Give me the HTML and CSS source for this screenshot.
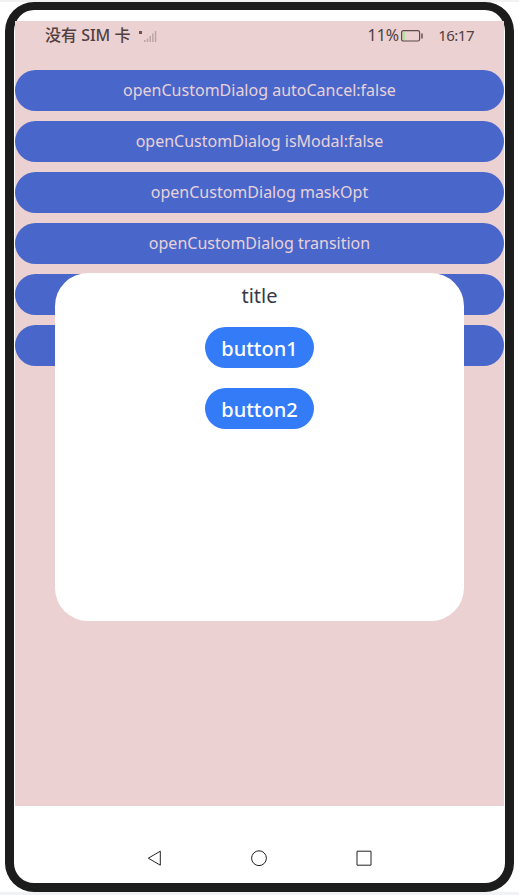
FILE: index.html
```html
<!DOCTYPE html>
<html lang="zh-CN">
<head>
<meta charset="utf-8">
<title>openCustomDialog</title>
<link rel="stylesheet" href="styles.css">
</head>
<body>
<div class="phone">
  <main class="screen">
    <header class="status">
      <span class="carrier">没有 SIM 卡</span>
      <svg class="signal" width="19" height="12" viewBox="0 0 19 12"><path class="mark" d="M1 1h3v3H1z"/><path class="bars" d="M6 10h1.5v2H6zM8.7 8.5h1.5V12H8.7zM11.4 6h1.5v6h-1.5zM14.1 3.5h1.5V12h-1.5zM16.8 1h1.5v11h-1.5z"/></svg>
      <span class="percent">11%</span>
      <svg class="battery" width="22" height="12" viewBox="0 0 22 12"><path class="charge" d="M1.5 1.5h2.5v9H1.5z"/><rect class="case" x=".6" y=".6" width="18" height="10.4" rx="1.8"/><path class="cap" d="M20.3 3.5h1.4v5h-1.4z"/></svg>
      <span class="clock">16:17</span>
    </header>
    <div class="list">
      <button class="item">openCustomDialog autoCancel:false</button>
      <button class="item">openCustomDialog isModal:false</button>
      <button class="item">openCustomDialog maskOpt</button>
      <button class="item">openCustomDialog transition</button>
      <button class="item"></button>
      <button class="item"></button>
    </div>
    <section class="dialog">
      <div class="title">title</div>
      <button class="action">button1</button>
      <button class="action">button2</button>
    </section>
  </main>
  <nav class="nav">
    <svg width="16" height="18" viewBox="0 0 16 18"><path d="M13.3 2.2v14L1.3 9.2z"/></svg>
    <svg width="18" height="18" viewBox="0 0 18 18"><circle cx="9" cy="9.2" r="7.4"/></svg>
    <svg width="18" height="18" viewBox="0 0 18 18"><path d="M2 2.2h14v14H2z"/></svg>
  </nav>
</div>
</body>
</html>
```
FILE: styles.css
```css
* { box-sizing: border-box; }
body {
  margin: 0;
  height: 895px;
  padding: 2px 5px 0;
  overflow: hidden;
  background: linear-gradient(#f2f2f3 0 2px, #fff 2px 892px, #f1f2f5 892px);
  font-family: "Noto Sans", "Noto Sans CJK SC", sans-serif;
}
button { border: 0; padding: 0; font-family: inherit; }
.phone {
  width: 509px;
  height: 890px;
  border: 9px solid #1c1c1c;
  border-top-width: 8px;
  border-radius: 29px;
  background: #fff;
  padding: 11px 1px 0;
  display: flex;
  flex-direction: column;
}
.screen {
  position: relative;
  height: 785px;
  background: #ebd1d1;
}
.status {
  height: 49px;
  padding: 0 30px;
  display: flex;
  align-items: flex-start;
  color: #51403f;
  line-height: 28px;
  white-space: nowrap;
}
.carrier { width: 93px; font-size: 16px; font-weight: 500; }
.signal { margin-top: 9px; }
.mark { fill: #655453; }
.bars { fill: #bba6a5; }
.percent { margin-left: auto; font-size: 16px; }
.battery { margin: 9px 15px 0 2px; fill: none; }
.case { stroke: #5c4b49; stroke-width: 1.2; }
.charge { fill: #b8dfa4; }
.cap { fill: #5c4b49; }
.clock { font-size: 15px; letter-spacing: -.5px; }
.list { display: flex; flex-direction: column; gap: 10.2px; }
.item {
  height: 40.9px;
  border-radius: 21px;
  background: #4967ca;
  color: #e8d2da;
  font-size: 16px;
  line-height: 41px;
}
.dialog {
  position: absolute;
  left: 40px;
  top: 251.5px;
  width: 409px;
  height: 348.5px;
  border-radius: 33px;
  background: #fff;
  display: flex;
  flex-direction: column;
  align-items: center;
}
.title { height: 54.5px; line-height: 46px; font-size: 20px; color: #373a46; }
.action {
  width: 109px;
  height: 41px;
  margin-bottom: 20px;
  border-radius: 21px;
  background: #337bf7;
  color: #fff;
  font-size: 20px;
  font-weight: 500;
  line-height: 41px;
  padding-top: 1px;
}
.nav {
  flex: 1;
  display: flex;
  align-items: flex-start;
  justify-content: center;
  gap: 87px;
  padding-top: 43px;
}
.nav svg { fill: none; stroke: #222; stroke-width: 1; }
```
